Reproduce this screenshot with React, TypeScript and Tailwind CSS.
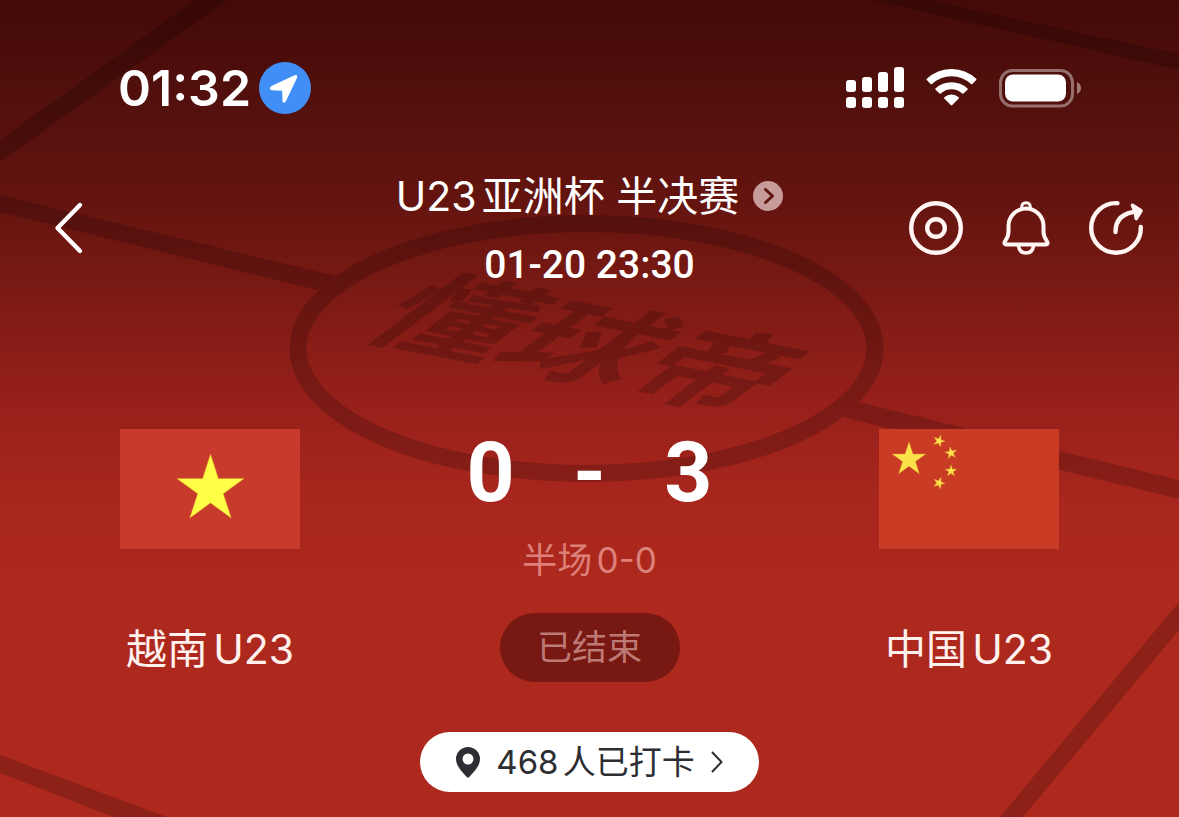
import type { ReactNode } from "react";

const latin = "font-['Inter','Noto_Sans_CJK_SC',sans-serif]";
const condensed = "font-['Roboto','Noto_Sans_CJK_SC',sans-serif]";

function starPoints(cx: number, cy: number, r: number, rotation = 0): string {
  return Array.from({ length: 10 }, (_, i) => {
    const radius = i % 2 === 0 ? r : r * 0.382;
    const angle = ((i * 36 - 90 + rotation) * Math.PI) / 180;
    return `${(cx + radius * Math.cos(angle)).toFixed(2)},${(cy + radius * Math.sin(angle)).toFixed(2)}`;
  }).join(" ");
}

function PitchBackdrop() {
  return (
    <svg
      className="absolute inset-0 -z-10 h-full w-full"
      viewBox="0 0 1179 817"
      preserveAspectRatio="xMidYMid slice"
      aria-hidden="true"
    >
      <g opacity="0.18">
        <path d="M0 140 195 0H227L0 162Z" />
        <path d="M872 0H927L1179 54V70Z" />
        <path d="M0 195 336 276 317 290 0 212Z" />
        <path d="M858 402 1179 480V499L843 417Z" />
        <path d="M1179 602V630L1023 817H1000Z" />
        <path d="M0 755 167 817H114L0 773Z" />
        <ellipse cx="586.5" cy="348.5" rx="288.5" ry="125" fill="none" stroke="#000" strokeWidth="17" />
        <text
          className="font-['Noto_Sans_CJK_SC',sans-serif] font-bold"
          fontSize="100"
          transform="matrix(1.3 0.26 -1.02 0.77 356 334)"
        >
          懂球帝
        </text>
      </g>
    </svg>
  );
}

function StatusBar() {
  return (
    <div className="flex items-center justify-between pr-[98px] pl-[118px]">
      <div className="flex items-center gap-2">
        <time className="text-[50px] leading-[52px] font-semibold">01:32</time>
        <svg className="size-[52px]" viewBox="0 0 52 52" aria-label="定位中" role="img">
          <circle cx="26" cy="26" r="26" fill="#418ff6" />
          <path
            d="M12.500 24 35 13.500Q39.300 12 37.800 16.300L27 39Q25.200 42.300 23.500 39.500L23.200 28.700 12.500 28.200Q9 26.500 12.500 24Z"
            fill="#fff"
          />
        </svg>
      </div>
      <div className="flex items-center gap-[22px]">
        <svg className="h-[42px] w-[58px]" viewBox="0 0 58 42" fill="#fff" aria-label="信号" role="img">
          <rect x="0" y="13" width="10" height="12" rx="3" />
          <rect x="16" y="10" width="10" height="15" rx="3" />
          <rect x="32" y="5" width="10" height="20" rx="3" />
          <rect x="48" y="0" width="10" height="25" rx="3" />
          <rect x="0" y="30" width="10" height="11" rx="3" />
          <rect x="16" y="30" width="10" height="11" rx="3" />
          <rect x="32" y="30" width="10" height="11" rx="3" />
          <rect x="48" y="30" width="10" height="11" rx="3" />
        </svg>
        <svg className="h-[38px] w-[51px]" viewBox="0 0 51 38" fill="#fff" aria-label="无线网络" role="img">
          <path d="M.8 9.800A36 36 0 0 1 50.200 9.800Q50.700 10.500 50.200 11.100L46.400 15Q45.700 15.500 45 15A28.300 28.300 0 0 0 6 15Q5.300 15.500 4.600 15L.8 11.100Q.3 10.500 .8 9.800Z" />
          <path d="M9.500 19.500A23.300 23.300 0 0 1 41.500 19.500Q42 20.100 41.500 20.700L37.400 24.500Q36.800 25.100 36.200 24.500A15.600 15.600 0 0 0 14.800 24.500Q14.200 25.100 13.600 24.500L9.500 20.700Q9 20.100 9.500 19.500Z" />
          <path d="M18.300 28.200A10.800 10.800 0 0 1 32.700 28.200Q33.300 28.900 32.700 29.500L26.300 36Q25.500 36.800 24.700 36L18.300 29.500Q17.700 28.900 18.300 28.200Z" />
        </svg>
        <svg className="h-[39px] w-[82px]" viewBox="0 0 82 39" aria-label="电量" role="img">
          <rect x="1.500" y="1.500" width="72" height="35.500" rx="12" fill="none" stroke="#fff" strokeOpacity="0.4" strokeWidth="3" />
          <rect x="6" y="5.500" width="61" height="27" rx="8" fill="#fff" />
          <path d="M78 13Q82 15 82 19T78 25Z" fill="#fff" fillOpacity="0.45" />
        </svg>
      </div>
    </div>
  );
}

function IconButton({ label, children }: { label: string; children: ReactNode }) {
  return (
    <button type="button" aria-label={label} className="size-[54px]">
      <svg
        className="size-full overflow-visible"
        viewBox="0 0 54 54"
        fill="none"
        stroke="#fff5f3"
        strokeWidth="4.4"
        strokeLinecap="round"
        strokeLinejoin="round"
      >
        {children}
      </svg>
    </button>
  );
}

function MatchNav() {
  return (
    <header className="mt-[54px] grid grid-cols-[1fr_auto_1fr] items-center px-9">
      <button type="button" aria-label="返回" className="ml-[18px] h-[54px] w-[30px]">
        <svg
          className="size-full"
          viewBox="0 0 30 54"
          fill="none"
          stroke="#fff"
          strokeWidth="4.4"
          strokeLinecap="round"
          strokeLinejoin="round"
        >
          <path d="M26 4 3.500 27 26 50" />
        </svg>
      </button>
      <div className="flex flex-col items-center gap-[18px]">
        <a href="#competition" className="flex items-center gap-[14px] text-[41px] leading-[56px]">
          <h1>U23亚洲杯 半决赛</h1>
          <svg className="size-[30px]" viewBox="0 0 30 30" aria-hidden="true">
            <circle cx="15" cy="15" r="15" fill="#c69b99" />
            <path
              d="M12.500 8.500 19.500 15 12.500 21.500"
              fill="none"
              stroke="#64140f"
              strokeWidth="3"
              strokeLinecap="round"
              strokeLinejoin="round"
            />
          </svg>
        </a>
        <time className={`${condensed} text-[39px] leading-[46px] font-medium`}>01-20 23:30</time>
      </div>
      <div className="flex items-center gap-9 justify-self-end">
        <IconButton label="直播">
          <circle cx="27" cy="27" r="24.8" />
          <circle cx="27" cy="27" r="8.8" />
        </IconButton>
        <IconButton label="提醒">
          <path
            d="M7 43.500H47Q49.800 43 47.800 40Q44.500 35 44.500 31V25A17.500 17.500 0 0 0 9.500 25V31Q9.500 35 6.200 40Q4.200 43 7 43.500Z"
            strokeWidth="4"
          />
          <path d="M22.500 7.500Q22.500 1.800 27 1.800T31.500 7.500" strokeWidth="3" />
          <path d="M19.500 45Q20.500 52 27 52T34.500 45" strokeWidth="3.6" />
        </IconButton>
        <IconButton label="分享">
          <path d="M28.500 2.200A24.800 24.800 0 1 0 51.800 26" />
          <path d="M26.500 31C26.500 19 33 11.500 49 10.500" />
          <path d="M43.500 4.200 52 9.800 47.200 17.500 46.500 11.500Z" fill="#fff5f3" strokeWidth="3.6" />
        </IconButton>
      </div>
    </header>
  );
}

function VietnamFlag() {
  return (
    <svg className="h-[120px] w-[180px]" viewBox="0 0 180 120" role="img" aria-label="越南国旗">
      <rect width="180" height="120" fill="#c83a2c" />
      <polygon points={starPoints(90.5, 60.5, 35.5)} fill="#ffff45" stroke="#d98a2a" strokeWidth="0.5" />
    </svg>
  );
}

function ChinaFlag() {
  return (
    <svg className="h-[120px] w-[180px]" viewBox="0 0 180 120" role="img" aria-label="中国国旗">
      <rect width="180" height="120" fill="#c93b24" />
      <g fill="#fbe14a" stroke="#d98a2a" strokeWidth="0.4">
        <polygon points={starPoints(30, 30.5, 17.8)} />
        <polygon points={starPoints(60, 12, 6.3, 20)} />
        <polygon points={starPoints(72, 24, 6.3, -10)} />
        <polygon points={starPoints(72, 42, 6.3)} />
        <polygon points={starPoints(60, 54, 6.3, 20)} />
      </g>
    </svg>
  );
}

function Team({ name, flag }: { name: string; flag: ReactNode }) {
  return (
    <div className="flex flex-col items-center gap-[72px]">
      {flag}
      <h2 className="text-[41px] leading-[56px] text-[#fff1ee]">{name}</h2>
    </div>
  );
}

function Scoreboard() {
  return (
    <section className="mt-[141px] flex items-start justify-between px-[120px]">
      <Team name="越南U23" flag={<VietnamFlag />} />
      <div className="flex flex-col items-center">
        <p className={`${condensed} flex w-[246px] items-center justify-between text-[84px] leading-[88px] font-bold`}>
          <span>0</span>
          <span>-</span>
          <span>3</span>
        </p>
        <p className="mt-[19px] text-[35px] leading-[48px] text-[#dd8078]">半场0-0</p>
        <p className="mt-[29px] w-[180px] rounded-full bg-[#781812] text-center text-[35px] leading-[69px] text-[#bd7a75]">
          已结束
        </p>
      </div>
      <Team name="中国U23" flag={<ChinaFlag />} />
    </section>
  );
}

function CheckInButton() {
  return (
    <button
      type="button"
      className="mt-[50px] flex h-[60px] items-center self-center rounded-full bg-white px-9 text-[#2c2e33]"
    >
      <svg className="h-[31px] w-6" viewBox="0 0 24 31" aria-hidden="true">
        <path
          fillRule="evenodd"
          d="M12 0A12 12 0 0 0 0 12C0 19 6.500 25.500 10.800 30Q12 31.200 13.200 30C17.500 25.500 24 19 24 12A12 12 0 0 0 12 0ZM12 6.500A5.500 5.500 0 1 1 12 17.500A5.500 5.500 0 1 1 12 6.500Z"
          fill="currentColor"
        />
      </svg>
      <span className="ml-4 text-[33px] leading-[48px]">468人已打卡</span>
      <svg
        className="ml-4 h-[22px] w-3"
        viewBox="0 0 12 22"
        fill="none"
        stroke="currentColor"
        strokeWidth="2"
        strokeLinejoin="round"
        aria-hidden="true"
      >
        <path d="M1 1 10.500 11 1 21" />
      </svg>
    </button>
  );
}

export default function App() {
  return (
    <main
      className={`${latin} relative isolate flex min-h-screen flex-col overflow-hidden bg-[linear-gradient(180deg,#430a08_0px,#52100c_100px,#64140f_200px,#7d1a14_300px,#96201a_400px,#a8261d_500px,#ad281d_580px)] pt-[62px] pb-6 text-white [text-autospace:normal]`}
    >
      <PitchBackdrop />
      <StatusBar />
      <MatchNav />
      <Scoreboard />
      <CheckInButton />
    </main>
  );
}
